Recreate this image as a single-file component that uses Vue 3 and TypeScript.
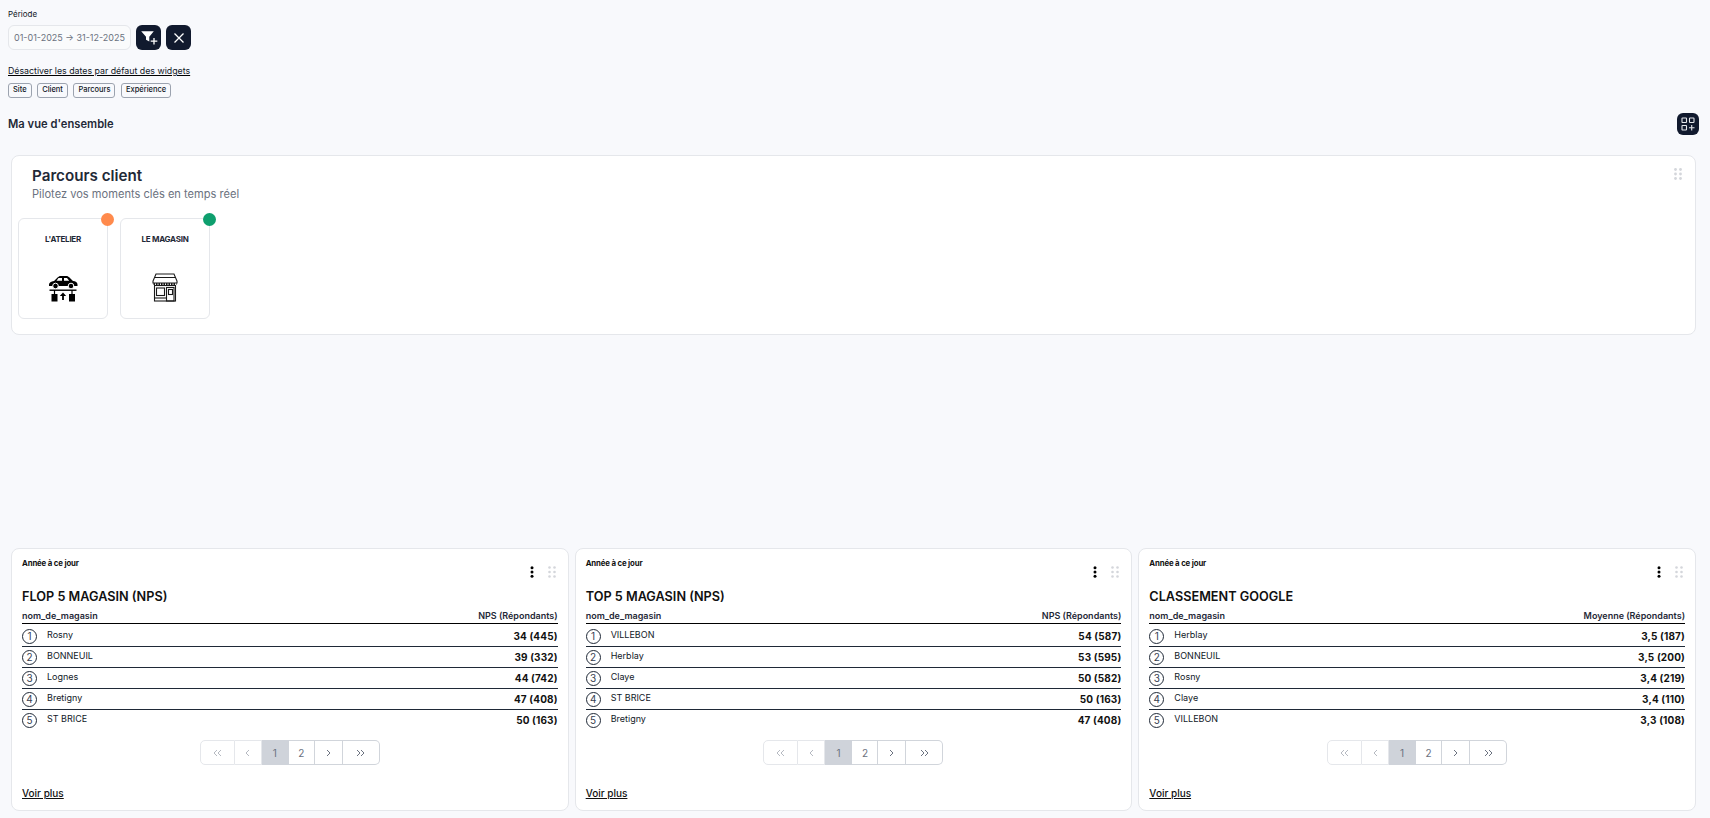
<script setup lang="ts">
interface Row { name: string; value: string }
interface Widget { title: string; metric: string; rows: Row[] }
const chips: string[] = ['Site', 'Client', 'Parcours', 'Expérience']
const widgets: Widget[] = [
  { title: 'FLOP 5 MAGASIN (NPS)', metric: 'NPS (Répondants)', rows: [
    { name: 'Rosny', value: '34 (445)' }, { name: 'BONNEUIL', value: '39 (332)' }, { name: 'Lognes', value: '44 (742)' }, { name: 'Bretigny', value: '47 (408)' }, { name: 'ST BRICE', value: '50 (163)' } ] },
  { title: 'TOP 5 MAGASIN (NPS)', metric: 'NPS (Répondants)', rows: [
    { name: 'VILLEBON', value: '54 (587)' }, { name: 'Herblay', value: '53 (595)' }, { name: 'Claye', value: '50 (582)' }, { name: 'ST BRICE', value: '50 (163)' }, { name: 'Bretigny', value: '47 (408)' } ] },
  { title: 'CLASSEMENT GOOGLE', metric: 'Moyenne (Répondants)', rows: [
    { name: 'Herblay', value: '3,5 (187)' }, { name: 'BONNEUIL', value: '3,5 (200)' }, { name: 'Rosny', value: '3,4 (219)' }, { name: 'Claye', value: '3,4 (110)' }, { name: 'VILLEBON', value: '3,3 (108)' } ] },
]
</script>

<template>
  <div class="page">
    <div class="label">Période</div>
    <div class="filters">
      <div class="date">01-01-2025 → 31-12-2025</div>
      <button class="dark"><svg width="25" height="25" viewBox="0 0 25 25"><path d="M5.200 6.200H17.800L13.300 11.800V16.500L10 14.700V11.800z" fill="#fff"/><path d="M18 13v6.500M14.700 16.200h6.600" stroke="#fff" stroke-width="1.300"/></svg></button>
      <button class="dark"><svg width="14" height="14" viewBox="0 0 14 14"><path d="M2.500 2.500l9 9M11.500 2.500l-9 9" stroke="#fff" stroke-width="1.300"/></svg></button>
    </div>
    <a class="toggle">Désactiver les dates par défaut des widgets</a>
    <div class="chips"><span v-for="c in chips" :key="c" class="chip">{{ c }}</span></div>
    <div class="head">
      <h2>Ma vue d'ensemble</h2>
      <button class="dark small"><svg width="14" height="14" viewBox="0 0 14 14" fill="none" stroke="#e5e7eb" stroke-width="1.100"><rect x="1" y="1" width="4.500" height="4.500" rx=".6"/><rect x="8.500" y="1" width="4.500" height="4.500" rx=".6"/><rect x="1" y="8.500" width="4.500" height="4.500" rx=".6"/><path d="M10.700 8v5.500M8 10.800h5.500"/></svg></button>
    </div>

    <section class="journey">
      <svg class="grip abs" width="8" height="12" viewBox="0 0 8 12" fill="#d4d6db"><circle v-for="n in 6" :key="n" :cx="n % 2 ? 1.500 : 6.500" :cy="1.500 + Math.floor((n - 1) / 2) * 4.500" r="1.400"/></svg>
      <div class="j-title">Parcours client</div>
      <div class="j-sub">Pilotez vos moments clés en temps réel</div>
      <div class="steps">
        <div class="step">
          <span class="dot orange"></span>
          <div class="step-name">L'ATELIER</div>
          <svg class="step-icon car" width="30" height="27" viewBox="0 0 30 27">
            <path d="M1 9.500c0-2 2-3 5-3.500l3.500-3.500c1-.8 2-1.500 3-1.500h6c1 0 2 .7 3 1.500L25 6c2.500.3 4.500 1.300 4.500 3.500V11H1z" fill="#000"/>
            <path d="M10.500 3h3.500v2.700h-5.500zM16 3h3l2.200 2.700H16z" fill="#fff"/>
            <circle cx="7.500" cy="11" r="2.800" fill="#000" stroke="#fff"/><circle cx="23" cy="11" r="2.800" fill="#000" stroke="#fff"/>
            <path d="M1.500 15.200h27" stroke="#000" stroke-width="1.400"/>
            <path d="M6.500 15v4.500M24 15v4.500" stroke="#000" stroke-width="1.200"/>
            <rect x="3.500" y="19" width="6" height="7.500" fill="#000"/><rect x="21" y="19" width="6" height="7.500" fill="#000"/>
            <path d="M15 25v-6" stroke="#000" stroke-width="1.800"/><path d="M11.800 21l3.200-3.500 3.200 3.500z" fill="#000"/>
          </svg>
        </div>
        <div class="step">
          <span class="dot green"></span>
          <div class="step-name">LE MAGASIN</div>
          <svg class="step-icon shop" width="26" height="29" viewBox="0 0 26 29" fill="none" stroke="#1a1a1a" stroke-width="1.100">
            <path d="M4 1h18l3 7v2H1V8z" fill="#fff"/><path d="M3 4.500h20" stroke-width="1"/>
            <path d="M1.500 11h23" stroke-width="2" stroke-dasharray="1.500 1"/>
            <rect x="2.500" y="12.500" width="21" height="15.500"/>
            <rect x="4.500" y="15" width="8" height="7.500"/>
            <rect x="14.500" y="14.500" width="7.500" height="13.500"/>
            <rect x="16.500" y="16.500" width="4" height="5"/>
            <path d="M2.500 25h12"/>
          </svg>
        </div>
      </div>
    </section>

    <div class="widgets">
      <article v-for="w in widgets" :key="w.title" class="widget">
        <div class="w-top">
          <div class="w-period">Année à ce jour</div>
          <div class="w-actions">
            <svg width="4" height="12" viewBox="0 0 4 12" fill="#000"><circle cx="2" cy="1.700" r="1.500"/><circle cx="2" cy="6" r="1.500"/><circle cx="2" cy="10.300" r="1.500"/></svg>
            <svg width="8" height="12" viewBox="0 0 8 12" fill="#d4d6db"><circle v-for="n in 6" :key="n" :cx="n % 2 ? 1.500 : 6.500" :cy="1.500 + Math.floor((n - 1) / 2) * 4.500" r="1.300"/></svg>
          </div>
        </div>
        <h3>{{ w.title }}</h3>
        <div class="t-head"><span>nom_de_magasin</span><span>{{ w.metric }}</span></div>
        <div class="t-body">
          <div v-for="(r, i) in w.rows" :key="r.name" class="t-row">
            <span class="rank">{{ i + 1 }}</span>
            <span class="name">{{ r.name }}</span>
            <span class="value">{{ r.value }}</span>
          </div>
        </div>
        <div class="pager-wrap">
          <div class="pager">
            <span class="p w35 off"><svg width="9" height="8" viewBox="0 0 9 8"><path d="M4 1L1 4l3 3M8 1L5 4l3 3"/></svg></span>
            <span class="p w27 off"><svg width="5" height="8" viewBox="0 0 5 8"><path d="M4 1L1 4l3 3"/></svg></span>
            <span class="p w27 active">1</span>
            <span class="p w26">2</span>
            <span class="p w28"><svg width="5" height="8" viewBox="0 0 5 8"><path d="M1 1l3 3-3 3"/></svg></span>
            <span class="p w37"><svg width="9" height="8" viewBox="0 0 9 8"><path d="M1 1l3 3-3 3M5 1l3 3-3 3"/></svg></span>
          </div>
        </div>
        <a class="more">Voir plus</a>
      </article>
    </div>
  </div>
</template>

<style>
html, body { margin: 0; background: #f8f9fc; }
</style>

<style scoped>
.page { box-sizing: border-box; height: 818px; overflow: hidden; padding: 9px 11px 0 8px; font-family: Inter, "Liberation Sans", sans-serif; color: #111827; background: #f8f9fc; }
.label { font-size: 8px; line-height: 10px; color: #111827; }
.filters { display: flex; gap: 5px; margin-top: 6px; }
.date { box-sizing: border-box; width: 123px; height: 25px; border: 1px solid #e5e7eb; border-radius: 6px; background: #fafbfc; font-size: 9px; line-height: 23px; color: #6b7280; padding-left: 5px; white-space: nowrap; }
button.dark { display: flex; align-items: center; justify-content: center; width: 25px; height: 25px; padding: 0; border: 0; border-radius: 6px; background: #111a2e; }
button.small { width: 22px; height: 22px; }
.toggle { display: block; width: max-content; margin-top: 15px; font-size: 8.800px; line-height: 11px; color: #111827; text-decoration: underline; text-decoration-color: #000; }
.chips { display: flex; gap: 5.500px; margin-top: 7px; }
.chip { box-sizing: border-box; height: 15px; padding: 0 4px; border: 1px solid #9ca3af; border-radius: 3px; font-size: 7.500px; line-height: 12px; font-weight: 500; color: #111827; }
.head { display: flex; justify-content: space-between; align-items: center; height: 22px; margin-top: 15px; }
h2 { margin: 0; font-size: 11.200px; font-weight: 600; color: #1f2937; }
.journey { position: relative; box-sizing: border-box; height: 180px; margin: 20px 3px 0 3px; padding: 10px 7px; background: #fff; border: 1px solid #e5e7eb; border-radius: 8px; }
.abs { position: absolute; top: 12px; right: 13px; }
.j-title { margin-left: 13px; font-size: 15.200px; line-height: 20px; font-weight: 600; color: #1f2937; }
.j-sub { margin-left: 13px; margin-top: 1px; font-size: 11.100px; line-height: 15px; color: #6b7280; }
.steps { display: flex; gap: 12px; margin-top: 16px; margin-left: -1px; }
.step { position: relative; box-sizing: border-box; width: 90px; height: 101px; border: 1px solid #e5e7eb; border-radius: 6px; display: flex; flex-direction: column; align-items: center; padding-top: 15px; }
.step-name { font-size: 8px; line-height: 10px; font-weight: 700; color: #1f2937; letter-spacing: -.25px; }
.step-icon { position: absolute; left: 50%; transform: translateX(-50%); }
.car { top: 56px; }
.shop { top: 54px; }
.dot { position: absolute; top: -6px; right: -7px; width: 13px; height: 13px; border-radius: 50%; }
.orange { background: #ff8a4c; }
.green { background: #0e9f6e; }
.widgets { display: grid; grid-template-columns: repeat(3, 1fr); gap: 6px; margin: 213px 3px 0 3px; }
.widget { box-sizing: border-box; height: 263px; padding: 9px 10px 8px; background: #fff; border: 1px solid #e5e7eb; border-radius: 8px; display: flex; flex-direction: column; }
.w-top { display: flex; justify-content: space-between; height: 32px; flex: none; }
.w-period { font-size: 7.800px; line-height: 10px; font-weight: 700; color: #111; letter-spacing: -.15px; }
.w-actions { display: flex; gap: 14px; margin: 8px 2px 0 0; height: 12px; align-items: center; }
h3 { margin: 0; font-size: 12.700px; line-height: 14px; font-weight: 600; color: #111; }
.t-head { display: flex; justify-content: space-between; margin-top: 6px; font-size: 9px; line-height: 11px; font-weight: 600; color: #1f2937; padding-bottom: 2px; border-bottom: 1px solid #000; }
.t-row { display: flex; align-items: center; height: 20px; border-bottom: 1px solid #1f2937; }
.t-row:first-child { padding-top: 2px; }
.t-row:last-child { border-bottom: 0; }
.rank { box-sizing: border-box; flex: none; width: 15px; height: 15px; border: 1px solid #1f2937; border-radius: 50%; font-size: 10px; line-height: 13px; text-align: center; color: #374151; }
.name { flex: 1; margin-left: 10px; margin-top: -3px; font-size: 9px; line-height: 11px; color: #111827; }
.value { font-size: 10px; line-height: 12px; font-weight: 700; color: #111; letter-spacing: .15px; }
.pager-wrap { display: flex; justify-content: center; margin-top: 10px; }
.pager { display: flex; height: 25px; }
.p { box-sizing: border-box; display: flex; align-items: center; justify-content: center; height: 25px; font-size: 10px; color: #6b7280; background: #fff; border: 1px solid #d1d5db; border-left-width: 0; }
.p:first-child { border-left-width: 1px; border-radius: 5px 0 0 5px; }
.p:last-child { border-radius: 0 5px 5px 0; }
.p svg { fill: none; stroke: #6b7280; stroke-width: 1; }
.p.off { border-color: #e5e7eb; }
.p.off svg { stroke: #b5b9c1; }
.p.active { background: #cfd3da; border-color: #cfd3da; }
.w26 { width: 26px; } .w27 { width: 27px; } .w28 { width: 28px; } .w35 { width: 35px; } .w37 { width: 37px; }
.more { margin-top: auto; margin-bottom: 2px; font-size: 10px; line-height: 13px; font-weight: 500; color: #111; text-decoration: underline; }
</style>
